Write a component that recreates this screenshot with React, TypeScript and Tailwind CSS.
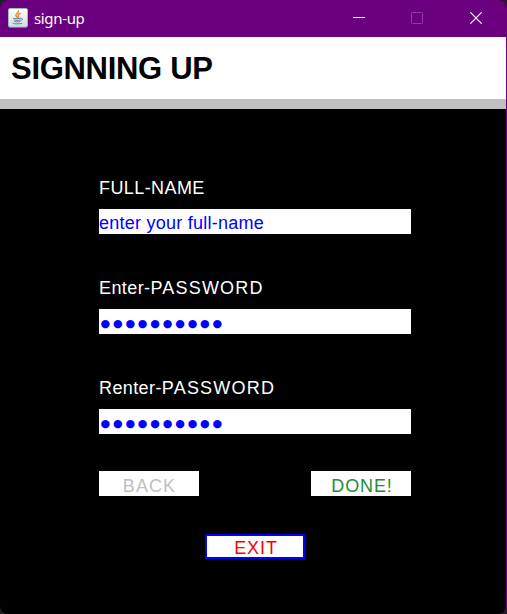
import type { ReactNode } from "react";

function JavaIcon() {
  return (
    <svg width="20" height="20" viewBox="0 0 20 20" fill="none">
      <defs>
        <linearGradient id="tile" x1="0" y1="0" x2="0" y2="1">
          <stop offset="0" stopColor="#ffffff" />
          <stop offset="1" stopColor="#d3dbe0" />
        </linearGradient>
      </defs>
      <rect x="0.5" y="0.5" width="19" height="18.6" rx="1.5" fill="url(#tile)" stroke="#a3b5bf" />
      <path d="M10.400 3c.6 1.800-3.200 2.800-2.500 4.600.3.800 1.200 1.400 1.700 2M12.400 5.400c-1.700.6-2.600 1.300-2 2.300.4.700.4 1.200-.2 1.900" stroke="#e8892f" strokeWidth="1.400" strokeLinecap="round" />
      <path d="M5.500 10.300c1.500.6 5.500.6 7 0M6 12c1.700.6 4.500.6 6.200 0M6.700 13.600c1.300.4 3.600.4 4.800 0M13 10.300c2.200-.4 2.200 1.800-.3 2.500M4.500 15.100c-.3.900 6 1.200 9.300.2" stroke="#5c83a5" strokeWidth="1" strokeLinecap="round" />
    </svg>
  );
}

function TitleBar() {
  return (
    <header className="flex h-[37px] shrink-0 items-start bg-[#6a007f] pl-2 text-white">
      <div className="pt-2">
        <JavaIcon />
      </div>
      <span className="ml-[6px] mt-[8px] font-['Noto_Sans',sans-serif] text-[15px] leading-[20px] tracking-[-0.350px]">sign-up</span>
      <div className="ml-auto mr-[24px] mt-3 flex">
        <svg className="mr-[46px]" width="12" height="12" shapeRendering="crispEdges">
          <path d="M0 5.500h12" stroke="white" />
        </svg>
        <svg className="mr-[47px]" width="12" height="12" fill="none" stroke="#8f3b9f">
          <rect x="0.5" y="0.5" width="11" height="11" rx="1" />
        </svg>
        <svg width="12" height="12" stroke="white" strokeWidth="1.200">
          <path d="M0.300 0.300 11.700 11.700M11.700 0.300 0.300 11.700" />
        </svg>
      </div>
    </header>
  );
}

function Field({ label, children }: { label: ReactNode; children: ReactNode }) {
  return (
    <div className="h-[100px]">
      <div className="h-[32px] whitespace-nowrap text-[18px] leading-[22px] text-white">{label}</div>
      <div className="h-[25px] whitespace-nowrap bg-white text-[#0000ff]">{children}</div>
    </div>
  );
}

function PasswordLabel({ prefix }: { prefix: string }) {
  return (
    <>
      <span className="tracking-[0.400px]">{prefix}</span>
      <span className="tracking-[1.200px]">PASSWORD</span>
    </>
  );
}

function Dots() {
  return (
    <div className="pl-[1.500px] pt-[2px] font-['DejaVu_Sans',sans-serif] text-[11px] leading-[25px] tracking-[2.850px]">
      ●●●●●●●●●●
    </div>
  );
}

export default function App() {
  return (
    <div className="h-[614px] w-[507px] overflow-hidden bg-[#202020] font-['Liberation_Sans',Arial,sans-serif]">
      <div className="flex h-full flex-col overflow-hidden rounded-[8px] border-r border-[#6a007f] bg-black">
        <TitleBar />
        <h1 className="h-[72px] shrink-0 border-b-[10px] border-[#c0c0c0] bg-white pl-[11px] text-[31px] font-bold leading-[64px] tracking-[-0.300px] text-black">
          SIGNNING UP
        </h1>
        <main className="ml-[99px] w-[312px] pt-[68px]">
          <Field label={<span className="tracking-[0.420px]">FULL-NAME</span>}>
            <div className="text-[18px] leading-[28px] tracking-[0.250px]">enter your full-name</div>
          </Field>
          <Field label={<PasswordLabel prefix="Enter-" />}>
            <Dots />
          </Field>
          <Field label={<PasswordLabel prefix="Renter-" />}>
            <Dots />
          </Field>
          <div className="-mt-[6px] flex justify-between">
            <button className="h-[25px] w-[100px] bg-white pl-px pt-[3px] text-[18px] leading-[24px] tracking-[1.100px] text-[#c0c0c0]">BACK</button>
            <button className="h-[25px] w-[100px] bg-white pl-[2px] pt-[3px] text-[18px] leading-[24px] tracking-[0.900px] text-[#228b3b]">DONE!</button>
          </div>
          <button className="ml-[106px] mt-[38px] block h-[25px] w-[100px] border-2 border-[#0000ff] bg-white pl-[2px] text-[18px] leading-[24px] tracking-[0.900px] text-[#ff0000]">EXIT</button>
        </main>
      </div>
    </div>
  );
}
